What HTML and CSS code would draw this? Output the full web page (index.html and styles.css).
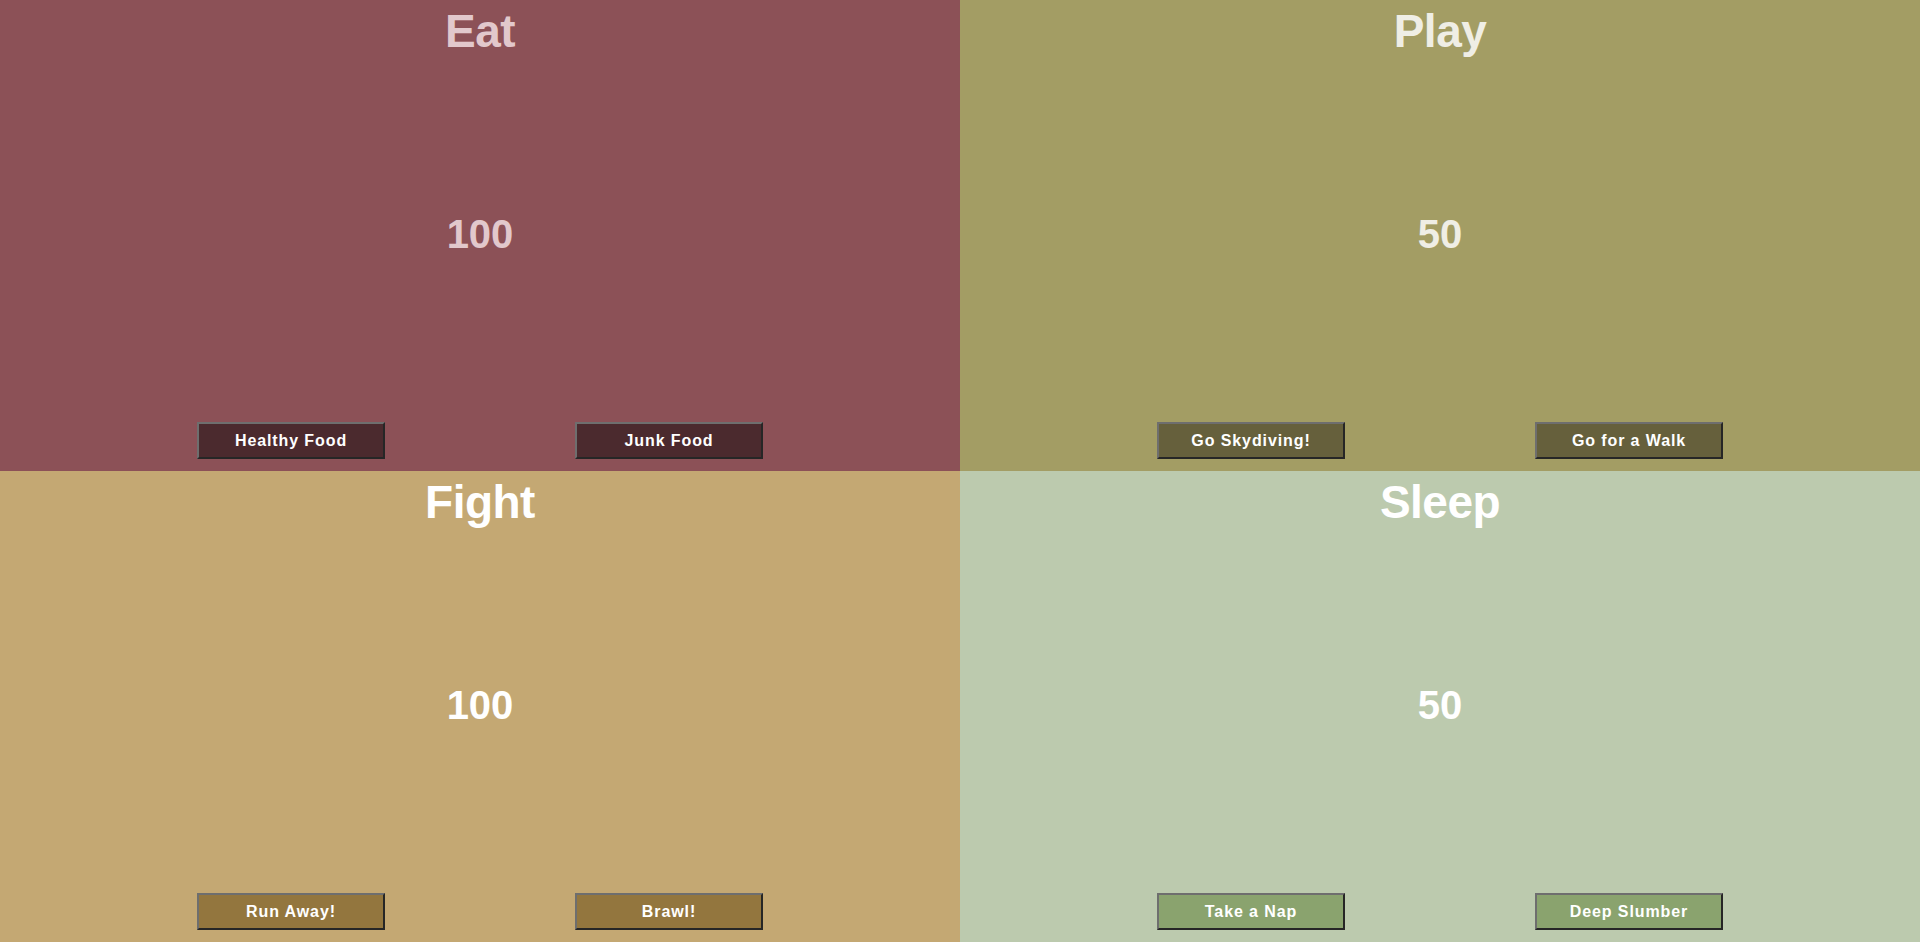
FILE: index.html
```html
<!DOCTYPE html>
<html>
<head>
<meta charset="utf-8">
<link rel="stylesheet" href="styles.css">
</head>
<body>
<div class="board">
  <section class="panel eat">
    <h1 class="title">Eat</h1>
    <div class="value">100</div>
    <div class="actions">
      <button class="btn">Healthy Food</button>
      <button class="btn">Junk Food</button>
    </div>
  </section>
  <section class="panel play">
    <h1 class="title">Play</h1>
    <div class="value">50</div>
    <div class="actions">
      <button class="btn">Go Skydiving!</button>
      <button class="btn">Go for a Walk</button>
    </div>
  </section>
  <section class="panel fight">
    <h1 class="title">Fight</h1>
    <div class="value">100</div>
    <div class="actions">
      <button class="btn">Run Away!</button>
      <button class="btn">Brawl!</button>
    </div>
  </section>
  <section class="panel sleep">
    <h1 class="title">Sleep</h1>
    <div class="value">50</div>
    <div class="actions">
      <button class="btn">Take a Nap</button>
      <button class="btn">Deep Slumber</button>
    </div>
  </section>
</div>
</body>
</html>
```

FILE: styles.css
```css
html, body {
  margin: 0;
  padding: 0;
  height: 100%;
}
body {
  font-family: "Liberation Sans", Arial, sans-serif;
}
.board {
  display: grid;
  grid-template-columns: 1fr 1fr;
  grid-template-rows: 471px 471px;
  width: 1920px;
  height: 942px;
}
.panel {
  display: flex;
  flex-direction: column;
  align-items: stretch;
  box-sizing: border-box;
  padding-bottom: 12px;
}
.title {
  margin: 0;
  padding-top: 8px;
  font-size: 46px;
  line-height: 46px;
  font-weight: bold;
  text-align: center;
  letter-spacing: -0.5px;
}
.value {
  flex: 1;
  display: flex;
  align-items: center;
  justify-content: center;
  font-size: 40px;
  font-weight: bold;
  padding-bottom: 8px;
}
.actions {
  display: flex;
  justify-content: space-evenly;
  padding: 0 7px;
}
.btn {
  width: 188px;
  height: 37px;
  box-sizing: border-box;
  border-width: 2px;
  border-style: solid;
  border-color: #6e6e6e #262626 #262626 #6e6e6e;
  color: #ffffff;
  font-family: "Liberation Sans", Arial, sans-serif;
  font-weight: bold;
  font-size: 16px;
  letter-spacing: 0.9px;
  padding: 0;
}
.eat { background: #8c5157; color: #e2c8cc; }
.eat .btn { background: #4b2a2e; }
.play { background: #a39d64; color: #efeee5; }
.play .btn { background: #66603c; }
.fight { background: #c4a873; color: #ffffff; }
.fight .btn { background: #93763e; }
.sleep { background: #bccaae; color: #ffffff; }
.sleep .btn { background: #8aa36e; }
```
